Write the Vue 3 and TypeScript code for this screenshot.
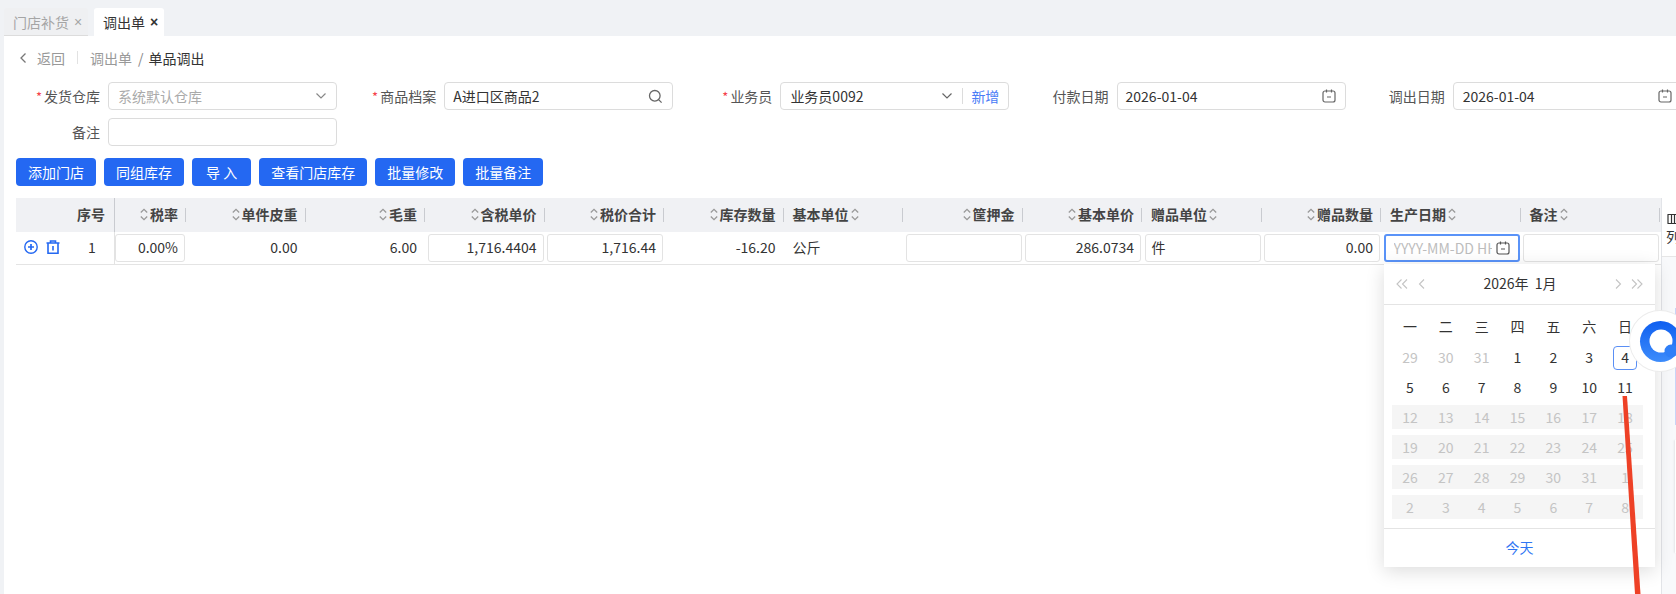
<script setup lang="ts">
interface Col { label: string; align: 'l' | 'r' }
const cols: Col[] = [
  { label: '税率', align: 'r' }, { label: '单件皮重', align: 'r' }, { label: '毛重', align: 'r' },
  { label: '含税单价', align: 'r' }, { label: '税价合计', align: 'r' }, { label: '库存数量', align: 'r' },
  { label: '基本单位', align: 'l' }, { label: '筐押金', align: 'r' }, { label: '基本单价', align: 'r' },
  { label: '赠品单位', align: 'l' }, { label: '赠品数量', align: 'r' }, { label: '生产日期', align: 'l' },
  { label: '备注', align: 'l' },
]
interface Cell { text: string; kind: 'plain' | 'input' | 'left' | 'inleft' | 'date' | 'rate' }
const cells: Cell[] = [
  { text: '0.00%', kind: 'rate' }, { text: '0.00', kind: 'plain' }, { text: '6.00', kind: 'plain' },
  { text: '1,716.4404', kind: 'input' }, { text: '1,716.44', kind: 'input' }, { text: '-16.20', kind: 'plain' },
  { text: '公斤', kind: 'left' }, { text: '', kind: 'input' }, { text: '286.0734', kind: 'input' },
  { text: '件', kind: 'inleft' }, { text: '0.00', kind: 'input' }, { text: '', kind: 'date' }, { text: '', kind: 'input' },
]
const buttons = ['添加门店', '同组库存', '导 入', '查看门店库存', '批量修改', '批量备注']
const week = ['一', '二', '三', '四', '五', '六', '日']
interface Day { n: number; muted?: boolean; off?: boolean; sel?: boolean }
const rows: Day[][] = [
  [{ n: 29, muted: true }, { n: 30, muted: true }, { n: 31, muted: true }, { n: 1 }, { n: 2 }, { n: 3 }, { n: 4, sel: true }],
  [5, 6, 7, 8, 9, 10, 11].map((n) => ({ n })),
  [12, 13, 14, 15, 16, 17, 18].map((n) => ({ n, off: true })),
  [19, 20, 21, 22, 23, 24, 25].map((n) => ({ n, off: true })),
  [26, 27, 28, 29, 30, 31, 1].map((n) => ({ n, off: true })),
  [2, 3, 4, 5, 6, 7, 8].map((n) => ({ n, off: true })),
]
</script>

<template>
  <div class="app">
    <div class="tabs">
      <div class="tab inactive">门店补货<span class="x">×</span></div>
      <div class="tab active">调出单<span class="x">×</span></div>
    </div>

    <div class="content">
      <div class="crumb">
        <svg class="back" width="8" height="12" viewBox="0 0 8 12"><path d="M6.5 1.5 2 6l4.5 4.5" fill="none" stroke="#777" stroke-width="1.3" /></svg>
        <span class="muted-txt">返回</span>
        <i class="vline"></i>
        <span class="muted-txt">调出单</span>
        <span class="slash">/</span>
        <span class="cur">单品调出</span>
      </div>

      <div class="form">
        <div class="item">
          <label><em>*</em>发货仓库</label>
          <div class="ctl"><span class="ph grow">系统默认仓库</span>
            <svg width="12" height="8" viewBox="0 0 12 8"><path d="M1.5 1.5 6 6l4.5-4.5" fill="none" stroke="#888" stroke-width="1.2" /></svg>
          </div>
        </div>
        <div class="item">
          <label><em>*</em>商品档案</label>
          <div class="ctl tight"><span class="grow">A进口区商品2</span>
            <svg width="15" height="15" viewBox="0 0 15 15"><circle cx="6.8" cy="6.8" r="5.3" fill="none" stroke="#666" stroke-width="1.3" /><path d="m10.6 10.6 3 3" stroke="#666" stroke-width="1.3" /></svg>
          </div>
        </div>
        <div class="item">
          <label><em>*</em>业务员</label>
          <div class="ctl"><span class="grow">业务员0092</span>
            <svg width="12" height="8" viewBox="0 0 12 8"><path d="M1.5 1.5 6 6l4.5-4.5" fill="none" stroke="#666" stroke-width="1.2" /></svg>
            <i class="sep"></i><span class="add">新增</span>
          </div>
        </div>
        <div class="item">
          <label>付款日期</label>
          <div class="ctl tight"><span class="grow">2026-01-04</span>
            <svg width="14" height="14" viewBox="0 0 14 14"><rect x="1" y="2" width="12" height="11" rx="2" fill="none" stroke="#666" stroke-width="1.2" /><path d="M4.5.5v3M9.5.5v3M5 8h4" stroke="#666" stroke-width="1.2" /></svg>
          </div>
        </div>
        <div class="item">
          <label>调出日期</label>
          <div class="ctl"><span class="grow">2026-01-04</span>
            <svg width="14" height="14" viewBox="0 0 14 14"><rect x="1" y="2" width="12" height="11" rx="2" fill="none" stroke="#666" stroke-width="1.2" /><path d="M4.5.5v3M9.5.5v3M5 8h4" stroke="#666" stroke-width="1.2" /></svg>
          </div>
        </div>
        <div class="item">
          <label>备注</label>
          <div class="ctl"></div>
        </div>
      </div>

      <div class="btns">
        <button v-for="b in buttons" :key="b" type="button" :class="{ wide: b === '导 入' }">{{ b }}</button>
      </div>

      <div class="table-wrap">
        <div class="table">
          <div class="grid thead">
            <div class="hcell fixed"><span class="seq">序号</span></div>
            <div v-for="c in cols" :key="c.label" class="hcell" :class="c.align === 'r' ? 'right' : 'left'">
              <div class="hlabel">
                <svg v-if="c.align === 'r'" class="sort" width="8" height="13" viewBox="0 0 8 13"><path d="M.8 4.500 4 1.300l3.200 3.200M.8 8.500 4 11.700l3.200-3.200" fill="none" stroke="#999" stroke-width="1.300" /></svg>
                <span>{{ c.label }}</span>
                <svg v-if="c.align === 'l'" class="sort" width="8" height="13" viewBox="0 0 8 13"><path d="M.8 4.500 4 1.300l3.200 3.200M.8 8.500 4 11.700l3.200-3.200" fill="none" stroke="#999" stroke-width="1.300" /></svg>
              </div>
              <i class="hdiv"></i>
            </div>
          </div>
          <div class="grid trow">
            <div class="bcell fixed">
              <svg width="14" height="14" viewBox="0 0 14 14"><circle cx="7" cy="7" r="6.200" fill="none" stroke="#2468f2" stroke-width="1.400" /><path d="M4 7h6M7 4v6" stroke="#2468f2" stroke-width="1.700" /></svg>
              <svg width="14" height="14" viewBox="0 0 14 14"><path d="M.5 3h13M4.500 3V1h5v2M2 3v10.200h10V3M7 6v4.500" fill="none" stroke="#2468f2" stroke-width="1.600" /></svg>
              <span class="seq">1</span>
            </div>
            <div v-for="(c, i) in cells" :key="i" class="bcell" :class="'k-' + c.kind">
              <template v-if="c.kind === 'plain' || c.kind === 'left'">{{ c.text }}</template>
              <div v-else-if="c.kind === 'date'" class="box focus">
                <span class="datephold">YYYY-MM-DD HH</span>
                <svg width="14" height="14" viewBox="0 0 14 14"><rect x="1" y="2" width="12" height="11" rx="2" fill="none" stroke="#555" stroke-width="1.2" /><path d="M4.5.5v3M9.5.5v3M5 8h4" stroke="#555" stroke-width="1.2" /></svg>
              </div>
              <div v-else class="box">{{ c.text }}</div>
            </div>
          </div>
        </div>
        <div class="side">
          <div class="side-top">
            <svg width="14" height="10" viewBox="0 0 14 10"><path d="M.5.5h13M.5 9.5h13M1 .5v9M4.5.5v9M7.5.5v9M10.5.5v9" fill="none" stroke="#333" stroke-width="1.2" /></svg>
            <span>列</span>
          </div>
        </div>
      </div>

      <div class="picker">
        <div class="p-head">
          <svg width="12" height="10" viewBox="0 0 12 10"><path d="M5.500.5 1 5l4.500 4.500M11 .5 6.500 5l4.500 4.500" fill="none" stroke="#c4c4c4" stroke-width="1.100" /></svg>
          <svg class="n2" width="7" height="10" viewBox="0 0 7 10"><path d="M6 .5 1.500 5 6 9.500" fill="none" stroke="#c4c4c4" stroke-width="1.100" /></svg>
          <span class="p-title">2026年&nbsp;&nbsp;1月</span>
          <svg class="n3" width="7" height="10" viewBox="0 0 7 10"><path d="M1 .5 5.500 5 1 9.500" fill="none" stroke="#c4c4c4" stroke-width="1.100" /></svg>
          <svg width="12" height="10" viewBox="0 0 12 10"><path d="M1 .5 5.500 5 1 9.500M6.500 .5 11 5 6.500 9.500" fill="none" stroke="#c4c4c4" stroke-width="1.100" /></svg>
        </div>
        <div class="p-body">
          <div class="p-row weekrow">
            <div v-for="w in week" :key="w" class="p-cell">{{ w }}</div>
          </div>
          <div v-for="(r, ri) in rows" :key="ri" class="p-row" :class="{ lift: ri < 2 }">
            <div v-for="(d, di) in r" :key="di" class="p-cell" :class="{ muted: d.muted, off: d.off }">
              <span :class="{ sel: d.sel }">{{ d.n }}</span>
            </div>
          </div>
        </div>
        <div class="p-foot">今天</div>
      </div>

      <i class="edge-strip"></i>
      <i class="edge-card"></i>
      <div class="orb">
        <svg width="60" height="60" viewBox="0 0 60 60">
          <defs>
            <linearGradient id="orbg" x1="0" y1="0" x2="0" y2="1">
              <stop offset="0" stop-color="#0f5ff0" />
              <stop offset="1" stop-color="#3d8cfb" />
            </linearGradient>
          </defs>
          <circle cx="30.500" cy="30.500" r="20.500" fill="url(#orbg)" />
          <circle cx="31" cy="30" r="11.500" fill="#fff" />
          <circle cx="41" cy="40" r="6.500" fill="#2f7ff8" />
        </svg>
      </div>
      <svg class="arrow" width="24" height="200" viewBox="0 0 24 200">
        <polygon points="1.500,0 6,0 19.500,198 14,198" fill="#ee4126" />
      </svg>
    </div>
  </div>
</template>

<style>
html, body { margin: 0; background: #fff; }
</style>

<style scoped>
.app {
  width: 1676px;
  height: 594px;
  background: #f0f2f5;
  overflow: hidden;
  display: flex;
  flex-direction: column;
  font-family: "Noto Sans CJK SC", "Noto Sans", sans-serif;
  font-size: 14px;
  color: #333;
}
.tabs {
  height: 36px;
  box-sizing: border-box;
  padding: 8px 0 0 4px;
  display: flex;
  gap: 6px;
}
.tab {
  height: 28px;
  display: flex;
  align-items: center;
  border-radius: 3px 3px 0 0;
  white-space: nowrap;
  box-sizing: border-box;
}
.tab.inactive {
  width: 84px;
  padding-left: 9px;
  color: #a5a5a5;
  background: #eff0f2;
  border-bottom: 1px solid #dcdcdc;
}
.tab.active {
  width: 70px;
  padding-left: 9px;
  background: #fff;
  color: #333;
}
.x { margin-left: 5px; font-family: "Liberation Sans", sans-serif; font-size: 14px; line-height: 1; }
.active .x { font-weight: 700; }
.content {
  position: relative;
  flex: 1;
  min-height: 0;
  margin-left: 4px;
  background: #fff;
  display: flex;
  flex-direction: column;
}
.crumb {
  height: 46px;
  flex: none;
  box-sizing: border-box;
  padding: 0 0 3px 15px;
  display: flex;
  align-items: center;
  white-space: nowrap;
}
.back { margin-right: 10px; }
.muted-txt { color: #999; }
.vline { width: 1px; height: 13px; background: #e2e2e2; margin: 0 12px 0 12px; }
.slash { color: #888; margin: 0 5px 0 6px; }
.cur { color: #333; }
.form {
  display: grid;
  grid-template-columns: repeat(5, 336.200px);
  row-gap: 8px;
  flex: none;
}
.item { display: flex; align-items: center; gap: 8px; height: 28px; }
.item label {
  width: 96px;
  flex: none;
  text-align: right;
  color: #555;
  white-space: nowrap;
  padding-bottom: 1px;
}
.item em { color: #f5424a; font-style: normal; margin-right: 2px; font-size: 13px; }
.ctl {
  width: 229px;
  height: 28px;
  flex: none;
  box-sizing: border-box;
  border: 1px solid #dcdcdc;
  border-radius: 4px;
  padding: 0 9px;
  display: flex;
  align-items: center;
  color: #333;
  white-space: nowrap;
}
.ctl.tight { padding-left: 8px; }
.grow { flex: 1; min-width: 0; padding-bottom: 1px; }
.ph { color: #aaa; }
.sep { width: 1px; height: 16px; background: #dcdcdc; margin: 0 6px 0 9px; }
.add { color: #4a7cf6; padding-bottom: 1px; margin-left: 2px; }
.btns {
  display: flex;
  gap: 8px;
  margin: 12px 0 0 12px;
  flex: none;
}
.btns button {
  height: 28px;
  padding: 0 12px 1px;
  border: 0;
  border-radius: 4px;
  background: #2468f2;
  color: #fff;
  font: inherit;
  white-space: nowrap;
}
.btns button.wide { padding: 0 14px 1px; }
.table-wrap {
  flex: 1;
  min-height: 0;
  display: flex;
  margin-top: 11.500px;
  padding-left: 12px;
}
.table { width: 1645px; flex: none; }
.grid {
  display: grid;
  grid-template-columns: 99px 72px repeat(10, 119.5px) repeat(2, 139.5px);
}
.thead { height: 34px; background: #f0f1f4; font-weight: 700; color: #444; }
.hcell { display: flex; align-items: center; padding-right: 1px; min-width: 0; }
.hcell.fixed { justify-content: flex-end; padding-right: 9px; border-right: 1px solid #c9cbd0; box-sizing: border-box; }
.hcell span { padding-bottom: 1px; }
.hlabel { flex: 1; display: flex; align-items: center; gap: 1px; white-space: nowrap; padding-right: 7px; min-width: 0; }
.right .hlabel { justify-content: flex-end; }
.left .hlabel { padding-left: 8px; }
.hdiv { width: 1px; height: 14px; background: #c9cbd0; flex: none; }
.sort { flex: none; margin: 0 1px; }
.seq { width: 28px; flex: none; text-align: center; white-space: nowrap; }
.trow { height: 33px; box-sizing: border-box; border-bottom: 1px solid #e4e4e4; }
.bcell {
  display: flex;
  align-items: center;
  justify-content: flex-end;
  padding: 1px 9px 3px 0;
  box-sizing: border-box;
  min-width: 0;
  white-space: nowrap;
}
.bcell.fixed { padding-left: 8px; justify-content: flex-start; border-right: 1px solid #e3e3e3; gap: 8px; }
.bcell.fixed svg { flex: none; }
.bcell.fixed .seq { margin-left: 10px; }
.k-left { justify-content: flex-start; padding-left: 8px; }
.k-input, .k-inleft, .k-date { padding: 2px 2px 2px 1.5px; }
.k-rate { padding: 2px 2px 2px 0; }
.box {
  flex: 1;
  min-width: 0;
  height: 28px;
  box-sizing: border-box;
  border: 1px solid #e3e3e3;
  border-radius: 3px;
  display: flex;
  align-items: center;
  justify-content: flex-end;
  padding: 0 6px 1px;
}
.k-inleft .box { justify-content: flex-start; }
.box.focus { border: 2px solid #5a93f8; justify-content: space-between; padding: 0 8px 0 8px; gap: 4px; }
.datephold { color: #bdbdbd; overflow: hidden; flex: 1; min-width: 0; }
.box.focus svg { flex: none; }
.side {
  flex: 1;
  min-width: 0;
  background: #f8f9fb;
  border-left: 1px solid #e2e4e8;
  overflow: hidden;
}
.side-top {
  height: 59px;
  box-sizing: border-box;
  background: #fff;
  border-bottom: 1px solid #e6e6e6;
  padding: 14px 0 0 4px;
  line-height: 20px;
  white-space: nowrap;
}
.side-top svg { display: block; margin: 2px 0 2px 1px; }
.picker {
  position: absolute;
  left: 1380px;
  top: 228px;
  width: 271px;
  height: 303px;
  background: #fff;
  box-shadow: 0 4px 18px rgba(0, 0, 0, 0.14);
  display: flex;
  flex-direction: column;
}
.p-head {
  height: 41px;
  flex: none;
  box-sizing: border-box;
  border-bottom: 1px solid #e4e4e4;
  display: flex;
  align-items: center;
  padding: 0 12px;
}
.n2 { margin-left: 10px; }
.n3 { margin-right: 9px; }
.p-title { flex: 1; text-align: center; color: #333; white-space: nowrap; padding-bottom: 2px; }
.p-body {
  flex: 1;
  padding: 10px 12px 0 8px;
  display: flex;
  flex-direction: column;
  gap: 5.800px;
}
.p-row { display: grid; grid-template-columns: repeat(7, 1fr); height: 24px; }
.weekrow { margin-bottom: 1px; }
.weekrow .p-cell { padding-bottom: 2px; box-sizing: border-box; }
.lift .p-cell span:not(.sel) { padding-bottom: 1px; }
.p-cell { display: flex; align-items: center; justify-content: center; color: #333; }
.p-cell.muted { color: #c4c4c4; }
.p-cell.off { color: #c4c4c4; background: #f5f5f5; }
.sel {
  width: 24px;
  height: 24px;
  box-sizing: border-box;
  border: 1px solid #5a8ff5;
  border-radius: 4px;
  display: flex;
  align-items: center;
  justify-content: center;
  padding-bottom: 1px;
}
.p-foot {
  height: 39px;
  flex: none;
  box-sizing: border-box;
  border-top: 1px solid #e4e4e4;
  padding-bottom: 3px;
  display: flex;
  align-items: center;
  justify-content: center;
  color: #2f75f3;
}
.orb {
  position: absolute;
  left: 1626px;
  top: 275px;
  width: 60px;
  height: 60px;
  border-radius: 50%;
  background: #fff;
  box-shadow: 0 0 0 1px #ececec;
}
.orb svg { display: block; }
.edge-strip {
  position: absolute;
  right: 0;
  top: 272px;
  width: 1px;
  height: 117px;
  background: #c8d5f8;
}
.edge-card {
  position: absolute;
  right: 0;
  top: 404px;
  width: 1px;
  height: 113px;
  background: #fff;
  box-shadow: -1px 0 2px rgba(0, 0, 0, 0.12);
}
.arrow {
  position: absolute;
  left: 1617px;
  top: 360px;
  pointer-events: none;
}
</style>
